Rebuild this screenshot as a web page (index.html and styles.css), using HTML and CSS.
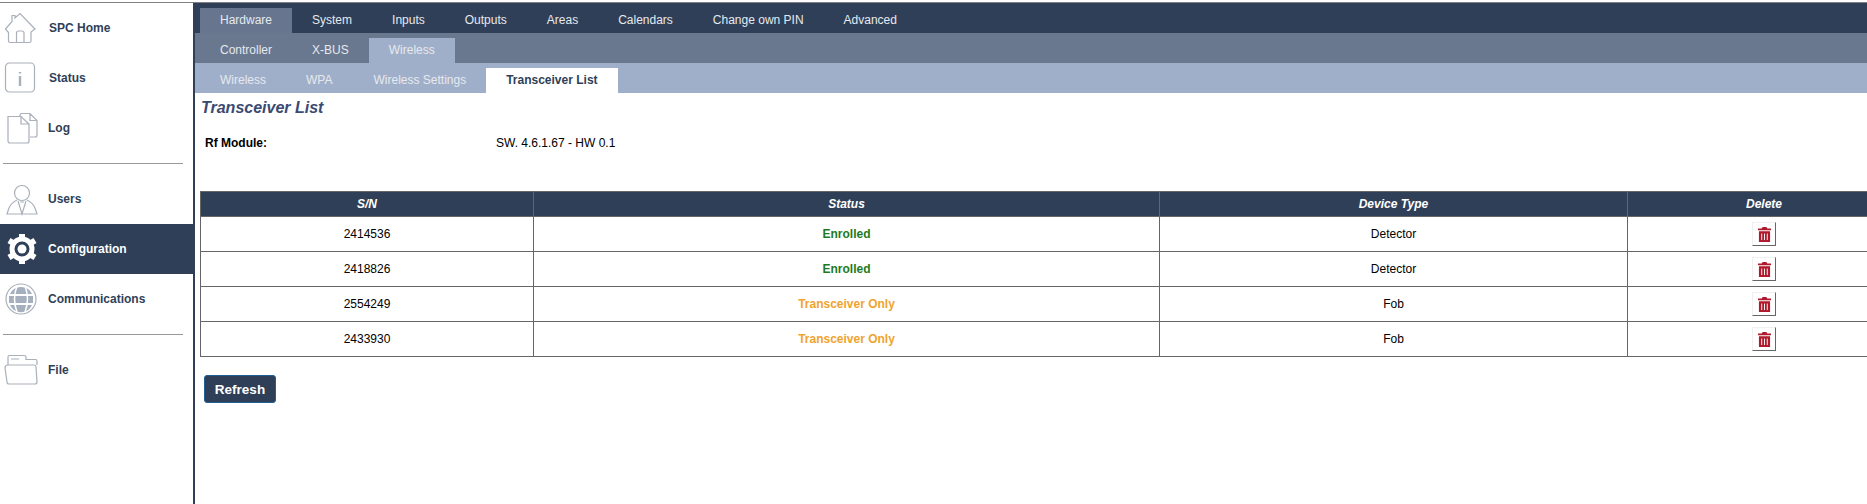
FILE: index.html
```html
<!DOCTYPE html>
<html lang="en">
<head>
<meta charset="utf-8">
<title>Transceiver List</title>
<link rel="stylesheet" href="styles.css">
</head>
<body>
<div class="page">
  <aside class="sidebar">
    <a class="nav-item wide"><svg class="nav-icon" viewBox="0 0 32 32"><path d="M1.500 17 L8 9.500 V3.500 H11 V6 L16 1.500 L31 17 L27 20 V29 Q27 30.500 25.500 30.500 H6 Q4.500 30.500 4.500 29 V20.500 Z M12.500 30.500 V21 Q12.500 19 14.500 19 H18 Q20 19 20 21 V30.500" /></svg><span>SPC Home</span></a>
    <a class="nav-item wide"><svg class="nav-icon" viewBox="0 0 32 32"><rect x="1.500" y="1" width="29" height="29" rx="4"/><path class="thick" d="M16 10 V11.500 M16 14 V24"/></svg><span>Status</span></a>
    <a class="nav-item"><svg class="nav-icon" viewBox="0 0 32 32"><path d="M16 4.500 V3 Q16 1.500 17.500 1.500 H26 L33 8.500 V23 Q33 25 31 25 H26 M4 4.500 H17 L25 12 V29 Q25 31 23 31 H6 Q4 31 4 29 Z M17 4.500 V12 H25 M26 1.500 V8.500 H33"/></svg><span>Log</span></a>
    <hr class="nav-rule">
    <a class="nav-item"><svg class="nav-icon" viewBox="0 0 32 32"><circle cx="18" cy="10" r="7.500"/><path d="M13 17 Q7 20 5 25 L3 31 H33 L31 25 Q29 20 23 17 M14 18 L18 31 L22 18 M16 19 H20"/></svg><span>Users</span></a>
    <a class="nav-item active"><svg class="nav-icon" viewBox="0 0 32 32"><g transform="translate(2 0)"><circle class="gear-ring" cx="16" cy="16" r="10"/><circle class="gear-hub" cx="16" cy="16" r="4.500"/><path class="gear-teeth" d="M13 1 H19 V7 H13 Z M13 25 H19 V31 H13 Z M1.500 10 L4.500 5 L9.500 8 L6.500 13 Z M22.500 24 L25.500 19 L30.500 22 L27.500 27 Z M1.500 22 L6.500 19 L9.500 24 L4.500 27 Z M22.500 8 L27.500 5 L30.500 10 L25.500 13 Z"/></g></svg><span>Configuration</span></a>
    <a class="nav-item"><svg class="nav-icon" viewBox="0 0 32 32"><circle cx="17" cy="16" r="15"/><path class="globe" d="M17 4 A12 12 0 0 1 28 11 H6 A12 12 0 0 1 17 4 Z M5 13 H29 V20 H5 Z M6 22 H28 A12 12 0 0 1 6 22 Z"/><path class="globe-line" d="M13 3 Q8 16 13 29 M21 3 Q26 16 21 29"/></svg><span>Communications</span></a>
    <hr class="nav-rule">
    <a class="nav-item"><svg class="nav-icon" viewBox="0 0 32 32"><path d="M4 11 V3 Q4 1.500 5.500 1.500 H20 Q22 1.500 22 3 V5.500 H31.500 Q33 5.500 33 7 V11 M4 11 H30 Q32 11 32 13 L33 28 Q33 30 31 30 H5 Q3 30 3 28 L1 14 Q1 11 4 11 Z M7 5 H15"/></svg><span>File</span></a>
  </aside>
  <main class="main">
    <nav class="tabs tabs-primary">
      <a class="tab current">Hardware</a><a class="tab">System</a><a class="tab">Inputs</a><a class="tab">Outputs</a><a class="tab">Areas</a><a class="tab">Calendars</a><a class="tab">Change own PIN</a><a class="tab">Advanced</a>
    </nav>
    <nav class="tabs tabs-secondary">
      <a class="tab">Controller</a><a class="tab">X-BUS</a><a class="tab current">Wireless</a>
    </nav>
    <nav class="tabs tabs-tertiary">
      <a class="tab">Wireless</a><a class="tab">WPA</a><a class="tab roomy">Wireless Settings</a><a class="tab current">Transceiver List</a>
    </nav>
    <section class="content">
      <h1 class="title">Transceiver List</h1>
      <div class="info-row"><b class="info-label">Rf Module:</b><span>SW. 4.6.1.67 - HW 0.1</span></div>
      <table class="grid">
        <colgroup><col class="c1"><col class="c2"><col class="c3"><col class="c4"></colgroup>
        <thead><tr><th>S/N</th><th>Status</th><th>Device Type</th><th>Delete</th></tr></thead>
        <tbody>
          <tr><td>2414536</td><td class="ok">Enrolled</td><td>Detector</td><td><button class="del"><svg viewBox="0 0 14 16"><path d="M5 0 H9 L10 1.500 H14 V3.500 H0 V1.500 H4 Z M1 4.500 H13 V16 H1 Z"/><path class="slot" d="M4 7 V14 M7 7 V14 M10 7 V14"/></svg></button></td></tr>
          <tr><td>2418826</td><td class="ok">Enrolled</td><td>Detector</td><td><button class="del"><svg viewBox="0 0 14 16"><path d="M5 0 H9 L10 1.500 H14 V3.500 H0 V1.500 H4 Z M1 4.500 H13 V16 H1 Z"/><path class="slot" d="M4 7 V14 M7 7 V14 M10 7 V14"/></svg></button></td></tr>
          <tr><td>2554249</td><td class="warn">Transceiver Only</td><td>Fob</td><td><button class="del"><svg viewBox="0 0 14 16"><path d="M5 0 H9 L10 1.500 H14 V3.500 H0 V1.500 H4 Z M1 4.500 H13 V16 H1 Z"/><path class="slot" d="M4 7 V14 M7 7 V14 M10 7 V14"/></svg></button></td></tr>
          <tr><td>2433930</td><td class="warn">Transceiver Only</td><td>Fob</td><td><button class="del"><svg viewBox="0 0 14 16"><path d="M5 0 H9 L10 1.500 H14 V3.500 H0 V1.500 H4 Z M1 4.500 H13 V16 H1 Z"/><path class="slot" d="M4 7 V14 M7 7 V14 M10 7 V14"/></svg></button></td></tr>
        </tbody>
      </table>
      <button class="refresh">Refresh</button>
    </section>
  </main>
</div>
</body>
</html>
```
FILE: styles.css
```css
* { box-sizing: border-box; }
html, body { margin: 0; height: 100%; overflow: hidden; background: #fff; }
body { font-family: "Liberation Sans", Arial, sans-serif; font-size: 12px; color: #000; }

.page { display: flex; width: 1867px; height: 504px; margin-top: 2px; border-top: 1px solid #808080; overflow: hidden; }

.sidebar { flex: 0 0 195px; border-right: 2px solid #2f3f58; }
.nav-item { display: flex; align-items: center; height: 50px; padding-left: 4px; gap: 12px; font-weight: bold; color: #2f3f58; }
.nav-item.wide { gap: 13px; }
.nav-icon { flex: 0 0 32px; width: 32px; height: 32px; overflow: visible; fill: none; stroke: #a9b0ba; stroke-width: 1.2; }
.nav-icon .thick { stroke-width: 2.4; }
.nav-rule { height: 1px; margin: 10px 10px 10px 3px; border: 0; background: #999; }
.nav-item.active { background: #2f3f58; color: #fff; }
.gear-ring { fill: none; stroke: #fff; stroke-width: 5; }
.gear-hub { fill: #fff; stroke: none; }
.gear-teeth { fill: #fff; stroke: none; }
.globe { fill: #a5afbe; stroke: none; }
.globe-line { stroke: #fff; stroke-width: 1.5; }

.main { flex: 1 1 auto; min-width: 0; }
.tabs { display: flex; align-items: flex-end; height: 30px; padding-left: 5px; }
.tab { display: flex; align-items: center; justify-content: center; height: 25px; padding: 0 20px 1px; white-space: nowrap; }
.tab.roomy { padding-left: 21px; }
.tabs-primary { background: #2f3f58; color: #e6e9ee; }
.tabs-primary .tab.current { background: #67758e; }
.tabs-secondary { background: #69778f; color: #e6e9ee; }
.tabs-secondary .tab.current { background: #a0afc9; }
.tabs-tertiary { background: #a0afc9; color: #e6e9ee; }
.tabs-tertiary .tab.current { background: #fff; color: #2f3f58; font-weight: bold; }

.content { padding: 0 0 0 5px; }
.title { margin: 0; padding: 6px 0 0 1px; height: 29px; font-size: 16px; font-weight: bold; font-style: italic; line-height: 18px; color: #3b4a72; }
.info-row { display: flex; align-items: center; height: 14px; margin-top: 14px; padding-left: 5px; }
.info-label { flex: 0 0 291px; }

.grid { width: 1700px; margin-top: 41px; table-layout: fixed; border-collapse: collapse; }
.c1 { width: 333px; }
.c2 { width: 626px; }
.c3 { width: 468px; }
.c4 { width: 273px; }
.grid th { height: 25px; padding: 0; background: #2f3f58; border: 1px solid #666; color: #fff; font-style: italic; font-weight: bold; text-align: center; }
.grid td { height: 35px; padding: 0; border: 1px solid #666; text-align: center; }
.grid .ok { color: #1e7a1e; font-weight: bold; }
.grid .warn { color: #f0a32e; font-weight: bold; }

.del { display: inline-flex; align-items: center; justify-content: center; width: 24px; height: 24px; padding: 0; vertical-align: middle; background: #fff; border: 1px solid; border-color: #f0f0f0 #666 #666 #f0f0f0; }
.del svg { width: 13px; height: 15px; fill: #b01a2c; }
.del .slot { stroke: #fff; stroke-width: 1; fill: none; }

.refresh { display: block; width: 72px; height: 28px; margin: 18px 0 0 4px; padding: 0; background: #2f3f58; border: 1px solid #1f5f94; border-radius: 3px; color: #fff; font-family: inherit; font-size: 13.5px; font-weight: bold; }
```
